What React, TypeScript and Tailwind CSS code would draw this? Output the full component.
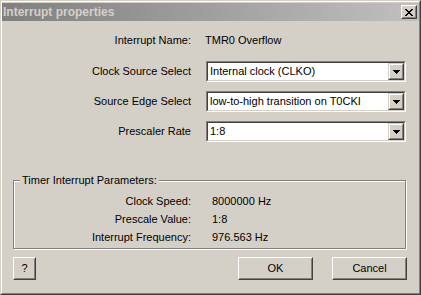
import React from "react";

const font = { fontFamily: '"Liberation Sans", Arial, sans-serif' };

function Combo({ value }: { value: string }) {
  return (
    <div className="w-[200px] h-[21px] border border-t-[#808080] border-l-[#808080] border-r-[#ffffff] border-b-[#ffffff]">
      <div className="h-full border border-t-[#404040] border-l-[#404040] border-r-[#d4d0c8] border-b-[#d4d0c8] bg-white flex items-center">
        <span className="flex-1 pl-[2px] text-[11px] leading-none text-black whitespace-nowrap">{value}</span>
        <div className="w-[16px] h-[17px] bg-[#d4d0c8] border border-t-[#d4d0c8] border-l-[#d4d0c8] border-r-[#404040] border-b-[#404040]">
          <div className="w-full h-full border border-t-white border-l-white border-r-[#808080] border-b-[#808080] flex items-center justify-center">
            <svg width="7" height="4" viewBox="0 0 7 4">
              <path d="M0 0h7v1h-1v1h-1v1h-1v1h-1v-1h-1v-1h-1v-1h-1z" fill="#000" />
            </svg>
          </div>
        </div>
      </div>
    </div>
  );
}

function Btn({ label, w }: { label: string; w: string }) {
  return (
    <div className={`${w} h-[23px] border border-t-white border-l-white border-r-[#404040] border-b-[#404040] bg-[#d4d0c8]`}>
      <div className="w-full h-full border border-t-[#d4d0c8] border-l-[#d4d0c8] border-r-[#808080] border-b-[#808080] flex items-center justify-center text-[11px] text-black">
        {label}
      </div>
    </div>
  );
}

export default function App() {
  return (
    <div style={font} className="w-[421px] h-[295px] bg-[#d4d0c8] border border-t-[#d4d0c8] border-l-[#d4d0c8] border-r-[#404040] border-b-[#404040]">
      <div className="w-full h-full border border-t-white border-l-white border-r-[#808080] border-b-[#808080] pt-[1px] flex flex-col">
        <div className="h-[18px] bg-gradient-to-r from-[#808080] to-[#c0c0c0] flex items-center justify-between pl-[1px] pr-[2px]">
          <span className="text-[12px] font-bold text-[#d4d0c8] leading-none">Interrupt properties</span>
          <div className="w-[16px] h-[14px] bg-[#d4d0c8] border border-t-white border-l-white border-r-[#404040] border-b-[#404040]">
            <div className="w-full h-full border border-t-[#d4d0c8] border-l-[#d4d0c8] border-r-[#808080] border-b-[#808080] flex items-center justify-center">
              <svg width="8" height="7" viewBox="0 0 8 7">
                <path d="M0 0h2v1h1v1h2v-1h1v-1h2v1h-1v1h-1v1h-1v1h1v1h1v1h1v1h-2v-1h-1v-1h-2v1h-1v1h-2v-1h1v-1h1v-1h1v-1h-1v-1h-1v-1h-1z" fill="#000" />
              </svg>
            </div>
          </div>
        </div>

        <div className="flex flex-col pl-[11px] text-[11px] text-black">
          <div className="flex items-center h-[16px] mt-[11px]">
            <span className="w-[178px] text-right">Interrupt Name:</span>
            <span className="ml-[14px]">TMR0 Overflow</span>
          </div>
          <div className="flex items-center mt-[13px]">
            <span className="w-[178px] text-right">Clock Source Select</span>
            <div className="ml-[15px]"><Combo value="Internal clock (CLKO)" /></div>
          </div>
          <div className="flex items-center mt-[9px]">
            <span className="w-[178px] text-right">Source Edge Select</span>
            <div className="ml-[15px]"><Combo value="low-to-high transition on T0CKI" /></div>
          </div>
          <div className="flex items-center mt-[9px]">
            <span className="w-[178px] text-right">Prescaler Rate</span>
            <div className="ml-[15px]"><Combo value="1:8" /></div>
          </div>

          <div className="relative mt-[38px] w-[393px] h-[69px] border border-[#808080] shadow-[inset_1px_1px_0_#fff,1px_1px_0_#fff]">
            <span className="absolute left-[6px] top-[-8px] bg-[#d4d0c8] px-[2px] leading-[14px]">Timer Interrupt Parameters:</span>
            <div className="flex flex-col pt-[11px]">
              <div className="flex items-center h-[18px]">
                <span className="w-[177px] text-right">Clock Speed:</span>
                <span className="ml-[21px]">8000000 Hz</span>
              </div>
              <div className="flex items-center h-[18px]">
                <span className="w-[177px] text-right">Prescale Value:</span>
                <span className="ml-[21px]">1:8</span>
              </div>
              <div className="flex items-center h-[18px]">
                <span className="w-[177px] text-right">Interrupt Frequency:</span>
                <span className="ml-[21px]">976.563 Hz</span>
              </div>
            </div>
          </div>

          <div className="flex items-center mt-[8px] w-[394px]">
            <Btn label="?" w="w-[23px]" />
            <div className="flex-1" />
            <Btn label="OK" w="w-[75px]" />
            <div className="w-[19px]" />
            <Btn label="Cancel" w="w-[75px]" />
          </div>
        </div>
      </div>
    </div>
  );
}
